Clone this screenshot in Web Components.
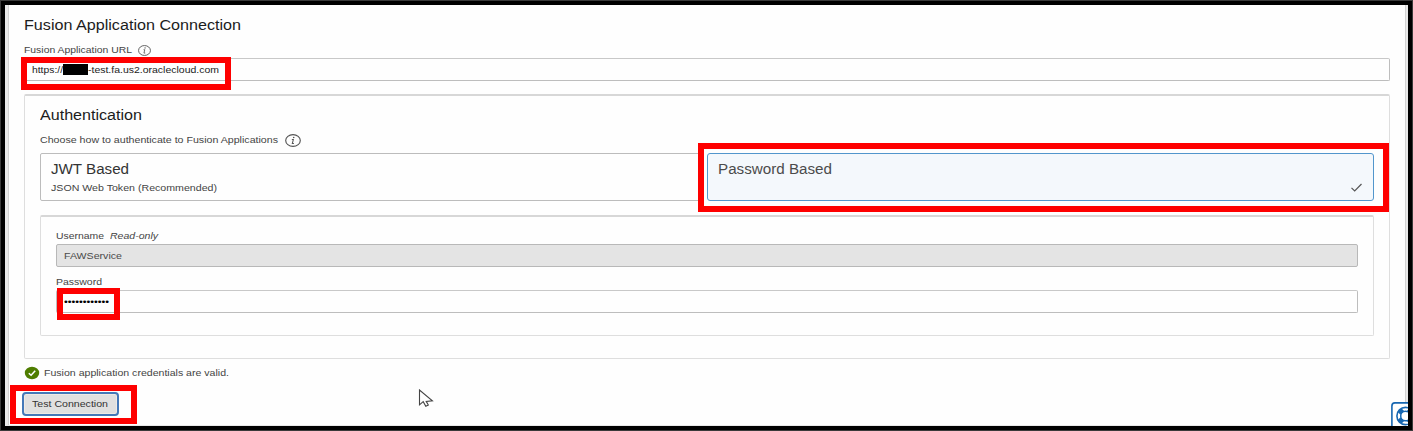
<!DOCTYPE html>
<html lang="en">
<head>
<meta charset="utf-8">
<title>Fusion Application Connection</title>
<style>
html, body { margin: 0; height: 431px; overflow: hidden; background: #3a3a3a; }
body { font-family: "Liberation Sans", Arial, sans-serif; color: #333; }
</style>
</head>
<body>
<connection-page></connection-page>
<script>
const define = (name, html, setup) => customElements.define(name, class extends HTMLElement {
  connectedCallback() {
    if (this.shadowRoot) return;
    const t = document.createElement('template');
    t.innerHTML = html;
    this.attachShadow({ mode: 'open' }).append(t.content.cloneNode(true));
    if (setup) setup(this, this.shadowRoot);
  }
});

/* A line of text stretched horizontally to the width given in its "w" attribute. */
define('wide-text', `
<style>
:host { display: block; flex: none; white-space: nowrap; text-align: left; line-height: var(--line, 16px); height: 16px; }
span { display: inline-block; transform-origin: 0 50%; }
</style><span><slot></slot></span>`, (el, root) => {
  const w = +el.getAttribute('w'), span = root.querySelector('span');
  el.style.width = w + 'px';
  span.style.transform = 'scaleX(' + w / span.getBoundingClientRect().width + ')';
});

define('info-icon', `
<style>:host { display: block; flex: none; width: 13px; height: 11px; } svg { display: block; width: 100%; height: 100%; }</style>
<svg viewBox="0 0 14 12" preserveAspectRatio="none" fill="none" stroke="#555">
<ellipse cx="7" cy="6" rx="6.4" ry="5.4" stroke-width="1"/>
<path d="M6 5.1H7.3L6.4 8.8H7.8" stroke-width=".9"/><circle cx="7.6" cy="3.2" r=".7" fill="#555" stroke="none"/></svg>`);

define('text-field', `
<style>
:host { display: flex; align-items: center; box-sizing: border-box; height: 23px; padding: 0 8px 0 7px;
  border: 1px solid #bdbdbd; border-top-color: #c8c8c8; border-radius: 2px; background: #fefefe; font-size: 9.8px; color: #222; }
:host([readonly]) { background: #e4e4e4; border-color: #b8b8b8; color: #4b4b4b; }
</style><slot></slot>`);

define('choice-card', `
<style>
:host { display: block; box-sizing: border-box; height: 48px; position: relative; padding: 6px 10px;
  border: 1px solid #bcbcbc; border-radius: 2px; background: #fefefe; font-size: 9.8px; color: #444; }
:host([selected]) { border-color: #5296cc; background: #f4f8fc; border-radius: 3px; }
.title { display: block; height: 20px; font-size: 14px; color: #333; --line: 18px; }
:host([selected]) .title { color: #4b4b4b; }
svg { display: none; position: absolute; right: 10px; bottom: 7px; }
:host([selected]) svg { display: block; }
</style>
<div class="title"><slot name="title"></slot></div><slot></slot>
<svg width="13" height="11" viewBox="0 0 13 11" fill="none" stroke="#555" stroke-width="1.2"><path d="M1.5 5.8L4.7 9L11.5 2"/></svg>`);

define('group-panel', `
<style>
:host { display: block; box-sizing: border-box; border: 1px solid #dedede; border-top: 2px solid #d7d7d7; border-radius: 2px; background: #fefefe; }
</style><slot></slot>`);

define('status-message', `
<style>
:host { display: flex; align-items: center; height: 16px; gap: 4px; font-size: 9.8px; color: #444; }
</style>
<svg width="16" height="14" viewBox="0 0 16 14"><ellipse cx="8" cy="7" rx="7.2" ry="6.2" fill="#4f7d00"/><path d="M4.8 7.2L7.1 9.3L11.2 4.8" fill="none" stroke="#fff" stroke-width="1.5"/></svg>
<slot></slot>`);

define('push-button', `
<style>
button { display: flex; align-items: center; justify-content: flex-start; box-sizing: border-box; width: 97px; height: 24px; margin: 0; padding: 0 0 0 8px;
  border: 2px solid #4478b8; border-radius: 4px; background: #e0e0e0; box-shadow: inset 0 0 0 1px #eeeae5; font: 9.8px "Liberation Sans", Arial, sans-serif; color: #333; }
</style><button><slot></slot></button>`);

/* Red rectangle that highlights a spot on the page. */
define('red-mark', `
<style>:host { position: absolute; box-sizing: border-box; border: 6px solid #fe0000; pointer-events: none; }</style>`, el => {
  const [x, y, w, h] = el.getAttribute('box').split(' ');
  Object.assign(el.style, { left: x + 'px', top: y + 'px', width: w + 'px', height: h + 'px' });
});

define('mouse-pointer', `
<style>:host { position: absolute; left: 418px; top: 389px; } svg { display: block; }</style>
<svg width="17" height="19" viewBox="0 0 17 19"><path d="M1.5 1V15.8L5.2 12.7L7.8 17.2L10.3 16L8.2 12.4L14.4 11.8Z" fill="#fff" stroke="#444" stroke-width="1.1"/></svg>`);

define('help-button', `
<style>:host { position: absolute; left: 1391px; top: 402px; width: 17px; height: 24px; overflow: hidden; } svg { display: block; }</style>
<svg width="34" height="32" viewBox="0 0 34 32" fill="none" stroke="#1767b1">
<rect x=".9" y=".9" width="31" height="30" rx="3" fill="#fff" stroke-width="1.6"/>
<circle cx="14.5" cy="14" r="8.6" stroke-width="1.6"/><circle cx="14.5" cy="14" r="4.8" stroke-width="1.5"/>
<g stroke-width="5.2"><path d="M8.6 8.1L11.3 10.8M8.6 19.9L11.3 17.2M20.4 8.1L17.7 10.8M20.4 19.9L17.7 17.2"/></g></svg>`);

define('connection-page', `
<style>
:host { display: block; position: relative; box-sizing: border-box; width: 1413px; height: 431px; padding: 1px; background: #3a3a3a; overflow: hidden; }
main { box-sizing: border-box; height: 429px; border: solid #000; border-width: 4px; background: #e9e9e9; padding: 0 2px 1px 3px; }
.page { box-sizing: border-box; height: 420px; background: #fefefe; border: solid #d2d2d2; border-width: 0 1px; padding: 11px 15px 0 15px; }
h1, h2 { margin: 0; font-weight: normal; font-size: 14px; color: #1c1c1c; }
h1 { --line: 18px; }
.row { display: flex; align-items: center; height: 16px; font-size: 9.8px; color: #444; }
.redact { flex: none; width: 25px; height: 11px; background: #000; }
.auth { height: 265px; margin-top: 13px; padding: 11px 15px 0; }
.cards { display: grid; grid-template-columns: 661px 667px; column-gap: 6px; margin-top: 5px; }
.creds { height: 121px; margin-top: 14px; padding: 11px 15px 0; }
.test { display: block; margin: 11px 0 0 -2px; }
</style>
<main><div class="page">
<h1><wide-text w="217">Fusion Application Connection</wide-text></h1>
<div class="row" style="margin-top:10px;gap:6px"><wide-text w="108">Fusion Application URL</wide-text><info-icon></info-icon></div>
<text-field><wide-text w="31">https://</wide-text><span class="redact"></span><wide-text w="131">-test.fa.us2.oraclecloud.com</wide-text></text-field>
<group-panel class="auth">
<h2><wide-text w="102">Authentication</wide-text></h2>
<div class="row" style="margin-top:9px;gap:7px"><wide-text w="238">Choose how to authenticate to Fusion Applications</wide-text><info-icon style="width:16px;height:13px"></info-icon></div>
<div class="cards">
<choice-card><wide-text slot="title" w="78">JWT Based</wide-text><wide-text w="166">JSON Web Token (Recommended)</wide-text></choice-card>
<choice-card selected><wide-text slot="title" w="114">Password Based</wide-text></choice-card>
</div>
<group-panel class="creds">
<div class="row" style="gap:6px"><wide-text w="48">Username</wide-text><wide-text w="48" style="font-style:italic">Read-only</wide-text></div>
<text-field readonly><wide-text w="58">FAWService</wide-text></text-field>
<div class="row" style="margin-top:7px"><wide-text w="46">Password</wide-text></div>
<text-field><wide-text w="45" style="font-size:9px;color:#000">••••••••••••</wide-text></text-field>
</group-panel>
</group-panel>
<status-message style="margin-top:6px"><wide-text w="185">Fusion application credentials are valid.</wide-text></status-message>
<push-button class="test"><wide-text w="76">Test Connection</wide-text></push-button>
</div></main>
<help-button></help-button>
<mouse-pointer></mouse-pointer>
<red-mark box="21 57 210 33"></red-mark>
<red-mark box="698 143 691 69"></red-mark>
<red-mark box="57 288 63 32"></red-mark>
<red-mark box="10 385 127 39"></red-mark>`);
</script>
</body>
</html>
